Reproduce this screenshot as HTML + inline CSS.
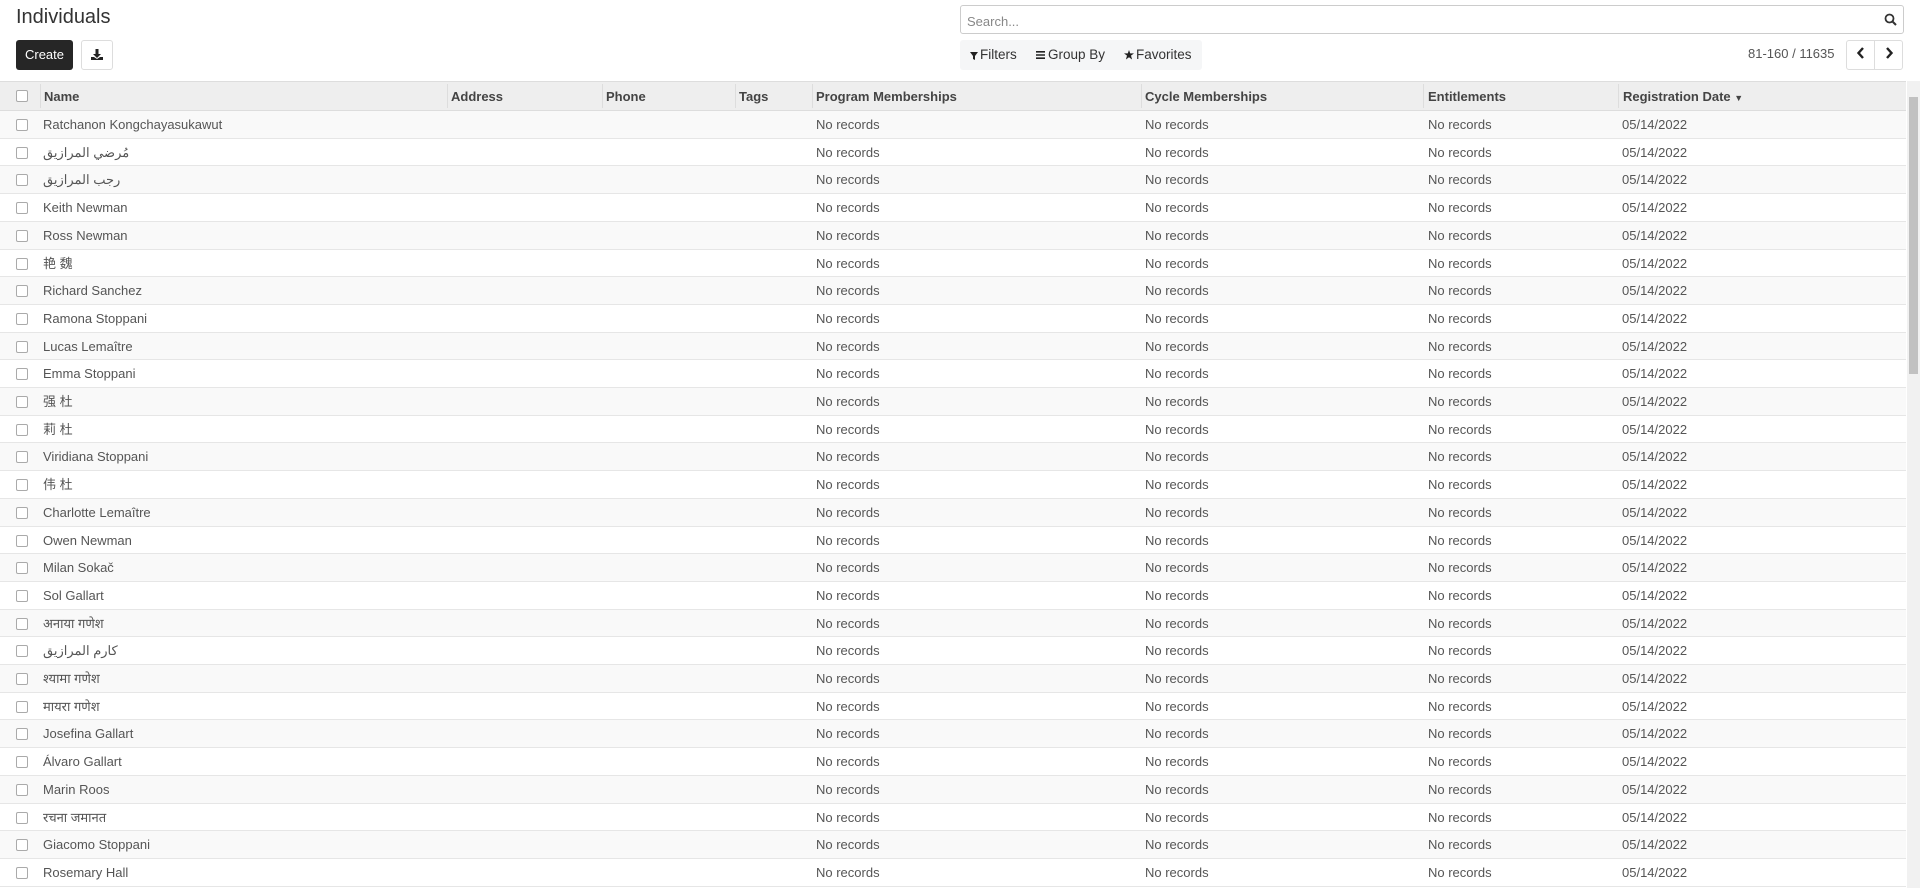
<!DOCTYPE html>
<html><head><meta charset="utf-8"><style>
*{box-sizing:border-box;margin:0;padding:0}
body{width:1920px;height:888px;overflow:hidden;background:#fff;font-family:"Liberation Sans","Noto Sans CJK SC",sans-serif;font-size:13px;color:#555;position:relative}
.title{position:absolute;left:16px;top:6px;font-size:20px;color:#333}
.create{position:absolute;left:16px;top:40px;width:57px;height:30px;background:#262626;color:#fff;border-radius:3px;font-size:13px;line-height:30px;text-align:center}
.dl{position:absolute;left:81px;top:40px;width:32px;height:30px;border:1px solid #ddd;border-radius:3px}
.search{position:absolute;left:960px;top:5px;width:944px;height:29px;border:1px solid #ccc;border-radius:3px;color:#888;padding:8px 6px;font-size:13px}
.filt{position:absolute;left:960px;top:40px;width:242px;height:30px;background:#f5f6f7;border-radius:3px;color:#333;font-size:13.5px;line-height:30px}
.pager{position:absolute;left:1748px;top:46px;color:#555;font-size:13px}
.pbtn{position:absolute;top:40px;height:30px;border:1px solid #ddd;width:29px;text-align:center;line-height:28px;color:#222}
.head{position:absolute;left:0;top:81px;width:1906px;height:30px;background:#eee;border-top:1px solid #ddd;border-bottom:1px solid #ddd;font-weight:bold;color:#444}
.row{position:absolute;left:0;width:1906px;border-bottom:1px solid #e6e6e6}
.c{position:absolute;top:0;line-height:27px;white-space:nowrap}
.head .c{line-height:29px}
.vl{position:absolute;top:2px;bottom:2px;width:1px;background:#ddd}
.cb{position:absolute;left:16px;top:8px;width:12px;height:12px;border:1px solid #aaa;border-radius:2px;background:#fff}
.sb{position:absolute;left:1907px;top:81px;width:13px;height:807px;background:#f1f1f1}
.sbt{position:absolute;left:1909px;top:97px;width:9px;height:277px;background:#c1c1c1}
</style></head><body>
<div class="title">Individuals</div>
<div class="create">Create</div>
<div class="dl"><svg width="30" height="28" viewBox="0 0 30 28"><path d="M13.5 8h3v5h2.5l-4 4-4-4h2.5z M9 16h3l3 2 3-2h3v3H9z" fill="#222"/></svg></div>
<div class="search">Search...<svg style="position:absolute;right:6px;top:7px" width="13" height="13" viewBox="0 0 13 13"><circle cx="5.5" cy="5.5" r="4" fill="none" stroke="#333" stroke-width="1.8"/><path d="M8.5 8.5l3.5 3.5" stroke="#333" stroke-width="2"/></svg></div>
<div class="filt"><svg style="position:absolute;left:10px;top:12px" width="8" height="8" viewBox="0 0 8 8"><path d="M0 0h8L5 4v4L3 7V4z" fill="#222"/></svg><span style="position:absolute;left:20px">Filters</span><svg style="position:absolute;left:76px;top:11px" width="9" height="8" viewBox="0 0 9 8"><path d="M0 0h9v1.6H0zM0 3.2h9v1.6H0zM0 6.4h9V8H0z" fill="#222"/></svg><span style="position:absolute;left:88px">Group By</span><svg style="position:absolute;left:164px;top:10px" width="10" height="10" viewBox="0 0 10 10"><path d="M5 0l1.2 3.4H10L7 5.6 8.1 9.5 5 7.2 1.9 9.5 3 5.6 0 3.4h3.8z" fill="#222"/></svg><span style="position:absolute;left:176px">Favorites</span></div>
<div class="pager">81-160 / 11635</div>
<div class="pbtn" style="left:1846px;border-radius:3px 0 0 3px"><svg width="10" height="12" viewBox="0 0 10 12"><path d="M7 1L2.5 6 7 11" fill="none" stroke="#222" stroke-width="2.4"/></svg></div>
<div class="pbtn" style="left:1874px;border-radius:0 3px 3px 0"><svg width="10" height="12" viewBox="0 0 10 12"><path d="M3 1l4.5 5L3 11" fill="none" stroke="#222" stroke-width="2.4"/></svg></div>
<div class="head">
<div class="cb"></div>
<div class="vl" style="left:40px"></div><div class="c" style="left:44px">Name</div>
<div class="vl" style="left:447px"></div><div class="c" style="left:451px">Address</div>
<div class="vl" style="left:602px"></div><div class="c" style="left:606px">Phone</div>
<div class="vl" style="left:735px"></div><div class="c" style="left:739px">Tags</div>
<div class="vl" style="left:812px"></div><div class="c" style="left:816px">Program Memberships</div>
<div class="vl" style="left:1141px"></div><div class="c" style="left:1145px">Cycle Memberships</div>
<div class="vl" style="left:1423px"></div><div class="c" style="left:1428px">Entitlements</div>
<div class="vl" style="left:1618px"></div><div class="c" style="left:1623px">Registration Date <span style="font-size:9px">&#9660;</span></div>
</div>
<div id="body" style="position:absolute;left:0;top:111px;width:1906px"></div>
<div class="sb"></div><div class="sbt"></div>
<script>
var n=["Ratchanon Kongchayasukawut","مُرضي المرازيق","رجب المرازيق","Keith Newman","Ross Newman","艳 魏","Richard Sanchez","Ramona Stoppani","Lucas Lemaître","Emma Stoppani","强 杜","莉 杜","Viridiana Stoppani","伟 杜","Charlotte Lemaître","Owen Newman","Milan Sokač","Sol Gallart","अनाया गणेश","كارم المرازيق","श्यामा गणेश","मायरा गणेश","Josefina Gallart","Álvaro Gallart","Marin Roos","रचना जमानत","Giacomo Stoppani","Rosemary Hall"];
var h="";
for(var i=0;i<n.length;i++){var t=Math.round(i*27.7),b=Math.round((i+1)*27.7);h+='<div class="row" style="top:'+t+'px;height:'+(b-t)+'px;background:'+(i%2==0?'#f9f9f9':'#fff')+'"><div class="cb"></div><div class="c" style="left:43px">'+n[i]+'</div><div class="c" style="left:816px">No records</div><div class="c" style="left:1145px">No records</div><div class="c" style="left:1428px">No records</div><div class="c" style="left:1622px">05/14/2022</div></div>';}
document.getElementById("body").innerHTML=h;
</script>
</body></html>
